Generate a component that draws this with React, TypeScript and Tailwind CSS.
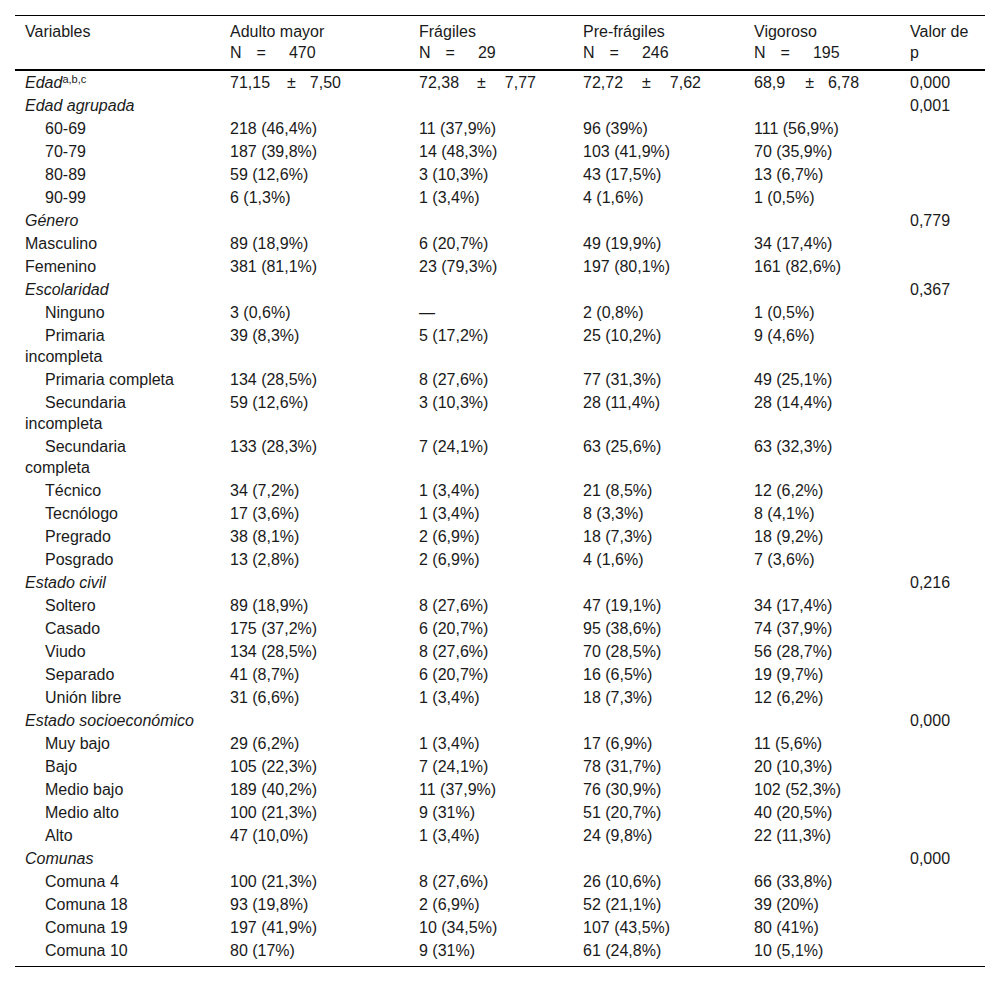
import React from 'react';

type Row = {
  label: string;
  kind: 'group' | 'item' | 'plain';
  cells?: string[];
  p?: string;
};

const rows: Row[] = [
  { label: 'Edad agrupada', kind: 'group', p: '0,001' },
  { label: '60-69', kind: 'item', cells: ['218 (46,4%)', '11 (37,9%)', '96 (39%)', '111 (56,9%)'] },
  { label: '70-79', kind: 'item', cells: ['187 (39,8%)', '14 (48,3%)', '103 (41,9%)', '70 (35,9%)'] },
  { label: '80-89', kind: 'item', cells: ['59 (12,6%)', '3 (10,3%)', '43 (17,5%)', '13 (6,7%)'] },
  { label: '90-99', kind: 'item', cells: ['6 (1,3%)', '1 (3,4%)', '4 (1,6%)', '1 (0,5%)'] },
  { label: 'Género', kind: 'group', p: '0,779' },
  { label: 'Masculino', kind: 'plain', cells: ['89 (18,9%)', '6 (20,7%)', '49 (19,9%)', '34 (17,4%)'] },
  { label: 'Femenino', kind: 'plain', cells: ['381 (81,1%)', '23 (79,3%)', '197 (80,1%)', '161 (82,6%)'] },
  { label: 'Escolaridad', kind: 'group', p: '0,367' },
  { label: 'Ninguno', kind: 'item', cells: ['3 (0,6%)', '—', '2 (0,8%)', '1 (0,5%)'] },
  { label: 'Primaria incompleta', kind: 'item', cells: ['39 (8,3%)', '5 (17,2%)', '25 (10,2%)', '9 (4,6%)'] },
  { label: 'Primaria completa', kind: 'item', cells: ['134 (28,5%)', '8 (27,6%)', '77 (31,3%)', '49 (25,1%)'] },
  { label: 'Secundaria incompleta', kind: 'item', cells: ['59 (12,6%)', '3 (10,3%)', '28 (11,4%)', '28 (14,4%)'] },
  { label: 'Secundaria completa', kind: 'item', cells: ['133 (28,3%)', '7 (24,1%)', '63 (25,6%)', '63 (32,3%)'] },
  { label: 'Técnico', kind: 'item', cells: ['34 (7,2%)', '1 (3,4%)', '21 (8,5%)', '12 (6,2%)'] },
  { label: 'Tecnólogo', kind: 'item', cells: ['17 (3,6%)', '1 (3,4%)', '8 (3,3%)', '8 (4,1%)'] },
  { label: 'Pregrado', kind: 'item', cells: ['38 (8,1%)', '2 (6,9%)', '18 (7,3%)', '18 (9,2%)'] },
  { label: 'Posgrado', kind: 'item', cells: ['13 (2,8%)', '2 (6,9%)', '4 (1,6%)', '7 (3,6%)'] },
  { label: 'Estado civil', kind: 'group', p: '0,216' },
  { label: 'Soltero', kind: 'item', cells: ['89 (18,9%)', '8 (27,6%)', '47 (19,1%)', '34 (17,4%)'] },
  { label: 'Casado', kind: 'item', cells: ['175 (37,2%)', '6 (20,7%)', '95 (38,6%)', '74 (37,9%)'] },
  { label: 'Viudo', kind: 'item', cells: ['134 (28,5%)', '8 (27,6%)', '70 (28,5%)', '56 (28,7%)'] },
  { label: 'Separado', kind: 'item', cells: ['41 (8,7%)', '6 (20,7%)', '16 (6,5%)', '19 (9,7%)'] },
  { label: 'Unión libre', kind: 'item', cells: ['31 (6,6%)', '1 (3,4%)', '18 (7,3%)', '12 (6,2%)'] },
  { label: 'Estado socioeconómico', kind: 'group', p: '0,000' },
  { label: 'Muy bajo', kind: 'item', cells: ['29 (6,2%)', '1 (3,4%)', '17 (6,9%)', '11 (5,6%)'] },
  { label: 'Bajo', kind: 'item', cells: ['105 (22,3%)', '7 (24,1%)', '78 (31,7%)', '20 (10,3%)'] },
  { label: 'Medio bajo', kind: 'item', cells: ['189 (40,2%)', '11 (37,9%)', '76 (30,9%)', '102 (52,3%)'] },
  { label: 'Medio alto', kind: 'item', cells: ['100 (21,3%)', '9 (31%)', '51 (20,7%)', '40 (20,5%)'] },
  { label: 'Alto', kind: 'item', cells: ['47 (10,0%)', '1 (3,4%)', '24 (9,8%)', '22 (11,3%)'] },
  { label: 'Comunas', kind: 'group', p: '0,000' },
  { label: 'Comuna 4', kind: 'item', cells: ['100 (21,3%)', '8 (27,6%)', '26 (10,6%)', '66 (33,8%)'] },
  { label: 'Comuna 18', kind: 'item', cells: ['93 (19,8%)', '2 (6,9%)', '52 (21,1%)', '39 (20%)'] },
  { label: 'Comuna 19', kind: 'item', cells: ['197 (41,9%)', '10 (34,5%)', '107 (43,5%)', '80 (41%)'] },
  { label: 'Comuna 10', kind: 'item', cells: ['80 (17%)', '9 (31%)', '61 (24,8%)', '10 (5,1%)'] },
];

const groups = [
  { name: 'Adulto mayor', n: '470' },
  { name: 'Frágiles', n: '29' },
  { name: 'Pre-frágiles', n: '246' },
  { name: 'Vigoroso', n: '195' },
];

// mean ± sd per group, gaps taken from the source layout
const means = [
  { m: '71,15', sd: '7,50', a: 'ml-[17px]', b: 'ml-[14px]' },
  { m: '72,38', sd: '7,77', a: 'ml-[18px]', b: 'ml-[19px]' },
  { m: '72,72', sd: '7,62', a: 'ml-[19px]', b: 'ml-[19px]' },
  { m: '68,9', sd: '6,78', a: 'ml-[20px]', b: 'ml-[14px]' },
];

const td = 'pl-[10px] pr-[6px] py-[1px] align-top';
const tdLast = 'pl-[10px] pr-[6px] pt-[1px] pb-[5px] align-top';

const App = () => {
  return (
    <div className="min-h-[982px] bg-white px-[15px] pt-[15px] font-['Liberation_Sans',Arial,sans-serif] text-[16px] leading-[21px] text-[#1a1a1a]">
      <table className="w-full table-fixed border-collapse border-t border-b border-black">
        <colgroup>
          <col className="w-[205px]" />
          <col className="w-[189px]" />
          <col className="w-[164px]" />
          <col className="w-[171px]" />
          <col className="w-[156px]" />
          <col />
        </colgroup>
        <thead>
          <tr className="border-b-2 border-black">
            <th className="pl-[10px] pt-[5px] pb-[6px] text-left align-top font-normal">Variables</th>
            {groups.map((g) => (
              <th key={g.name} className="pl-[10px] pt-[5px] pb-[6px] text-left align-top font-normal">
                <div>{g.name}</div>
                <div>
                  N<span className="ml-[15px]">=</span>
                  <span className="ml-[23px]">{g.n}</span>
                </div>
              </th>
            ))}
            <th className="pl-[10px] pr-[10px] pt-[5px] pb-[6px] text-left align-top font-normal">Valor de p</th>
          </tr>
        </thead>
        <tbody>
          <tr>
            <td className={td}>
              <i>Edad</i>
              <sup className="top-[-5px] text-[11px] leading-none">a,b,c</sup>
            </td>
            {means.map((x) => (
              <td key={x.m} className={td}>
                {x.m}
                <span className={x.a}>±</span>
                <span className={x.b}>{x.sd}</span>
              </td>
            ))}
            <td className={td}>0,000</td>
          </tr>
          {rows.map((r, i) => {
            const cls = i === rows.length - 1 ? tdLast : td;
            if (r.kind === 'group') {
              return (
                <tr key={r.label}>
                  <td className={`${cls} whitespace-nowrap`}>
                    <i>{r.label}</i>
                  </td>
                  <td className={cls} />
                  <td className={cls} />
                  <td className={cls} />
                  <td className={cls} />
                  <td className={cls}>{r.p}</td>
                </tr>
              );
            }
            return (
              <tr key={r.label}>
                <td className={`${cls} pr-[40px] ${r.kind === 'item' ? 'indent-5' : ''}`}>{r.label}</td>
                {r.cells!.map((c, j) => (
                  <td key={j} className={cls}>
                    {c}
                  </td>
                ))}
                <td className={cls} />
              </tr>
            );
          })}
        </tbody>
      </table>
    </div>
  );
};

export default App;
